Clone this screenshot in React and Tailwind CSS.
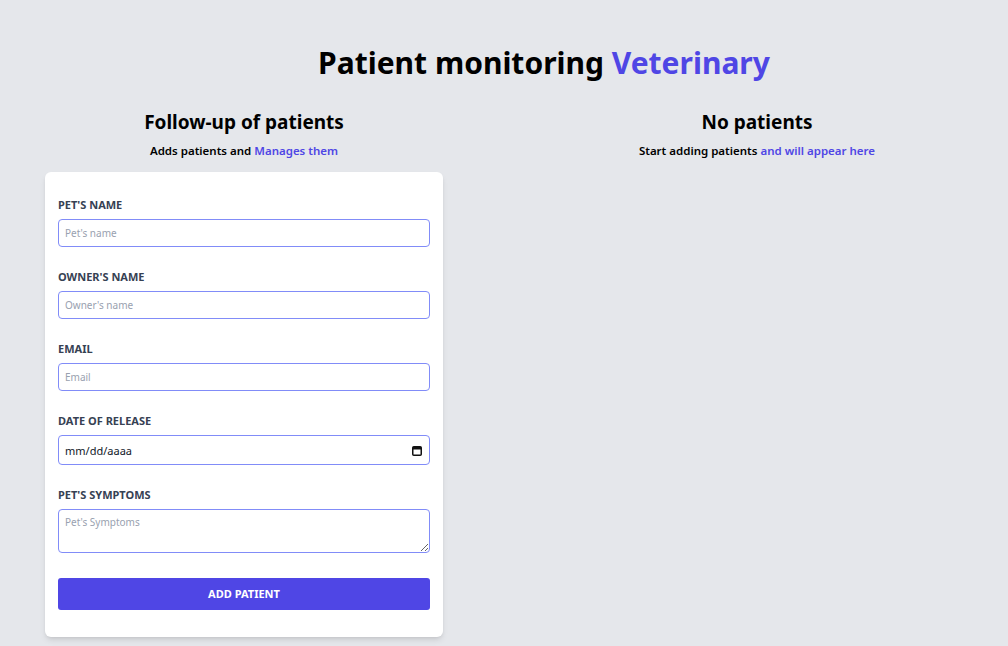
import { useState } from 'react';

function Field({ label, children }) {
  return (
    <div className="mb-[23px]">
      <label className="block text-[11px] font-bold uppercase text-gray-700 mb-[7px] leading-[14px]">{label}</label>
      {children}
    </div>
  );
}

export default function App() {
  const [form, setForm] = useState({ pet: '', owner: '', email: '', date: '', symptoms: '' });
  const set = (k) => (e) => setForm({ ...form, [k]: e.target.value });

  const inputCls =
    'block w-full h-[28px] px-[6px] text-[10px] border border-[#818cf8] rounded-[4px] bg-white placeholder:text-gray-400 outline-none';

  return (
    <div className="min-h-screen bg-gray-200 pt-[43px] font-['Noto_Sans',sans-serif] text-black">
      <h1 className="text-[30px] font-bold text-center leading-[40px] pl-[80px]">
        Patient monitoring <span className="text-[#4f46e5]">Veterinary</span>
      </h1>

      <div className="flex mt-[25px]">
        <div className="w-[488px] px-[45px]">
          <h2 className="text-[19px] font-bold text-center leading-[28px]">Follow-up of patients</h2>
          <p className="text-[11.5px] font-semibold text-center mt-[7px] mb-[13px] leading-[16px]">
            Adds patients and <span className="text-[#4f46e5]">Manages them</span>
          </p>

          <form className="bg-white rounded-md shadow-md px-[13px] pt-[26px] pb-[27px]">
            <Field label="Pet's name">
              <input className={inputCls} placeholder="Pet's name" value={form.pet} onChange={set('pet')} />
            </Field>
            <Field label="Owner's name">
              <input className={inputCls} placeholder="Owner's name" value={form.owner} onChange={set('owner')} />
            </Field>
            <Field label="Email">
              <input type="email" className={inputCls} placeholder="Email" value={form.email} onChange={set('email')} />
            </Field>
            <Field label="Date of release">
              <div className="relative">
                <input
                  className="block w-full h-[30px] px-[6px] text-[11px] border border-[#818cf8] rounded-[4px] bg-white placeholder:text-gray-900 outline-none"
                  placeholder="mm/dd/aaaa"
                  value={form.date}
                  onChange={set('date')}
                />
                <svg className="absolute right-[8px] top-[10px]" width="10" height="11" viewBox="0 0 10 11" fill="none">
                  <rect x="0.75" y="1.75" width="8.5" height="8.5" rx="1" stroke="#111" strokeWidth="1.5" />
                  <rect x="1" y="2" width="8" height="2.5" fill="#111" />
                </svg>
              </div>
            </Field>
            <Field label="Pet's symptoms">
              <textarea
                className="block w-full h-[44px] px-[6px] py-[5px] text-[10px] border border-[#818cf8] rounded-[4px] placeholder:text-gray-400 outline-none"
                placeholder="Pet's Symptoms"
                value={form.symptoms}
                onChange={set('symptoms')}
              />
            </Field>
            <button
              type="button"
              className="w-full h-[32px] mt-[2px] bg-[#4f46e5] text-white text-[11px] font-bold uppercase rounded-[3px]"
            >
              Add patient
            </button>
          </form>
        </div>

        <div className="flex-1 pl-[18px]">
          <h2 className="text-[19px] font-bold text-center leading-[28px]">No patients</h2>
          <p className="text-[11.5px] font-semibold text-center mt-[7px] leading-[16px]">
            Start adding patients <span className="text-[#4f46e5]">and will appear here</span>
          </p>
        </div>
      </div>
    </div>
  );
}
